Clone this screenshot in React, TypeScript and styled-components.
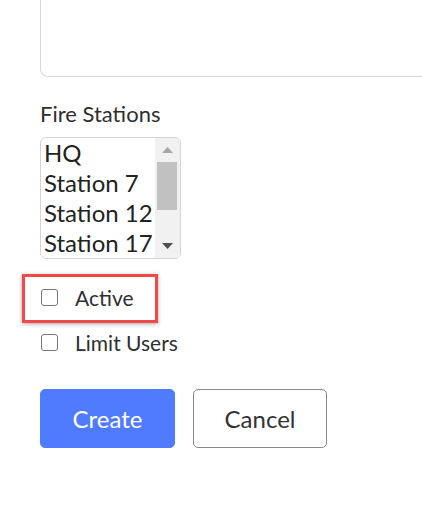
import styled, { createGlobalStyle } from "styled-components";

const GlobalStyle = createGlobalStyle`
  html, body {
    margin: 0;
    padding: 0;
    background: #fff;
    overflow: hidden;
  }
  body {
    font-family: Lato, "Open Sans", Arial, sans-serif;
    color: #333;
  }
`;

const Page = styled.div`
  display: flex;
  flex-direction: column;
  align-items: flex-start;
  padding-left: 40px;
`;

const Notes = styled.textarea`
  display: block;
  box-sizing: border-box;
  width: 382px;
  height: 107px;
  margin-top: -30px;
  border: 1px solid #d8d8d8;
  border-right: none;
  border-radius: 8px 0 0 8px;
  resize: none;
  outline: none;
`;

const FieldLabel = styled.div`
  margin-top: 24px;
  font-size: 22px;
  line-height: 1.2;
  color: #2f2f2f;
`;

const ListBox = styled.div`
  display: flex;
  box-sizing: border-box;
  margin-top: 10px;
  width: 141px;
  height: 122px;
  border: 1px solid #d4d4d4;
  border-radius: 6px;
  overflow: hidden;
`;

const Options = styled.ul`
  flex: 1;
  margin: 0;
  padding: 0;
  list-style: none;
`;

const Option = styled.li`
  height: 30px;
  padding-left: 3px;
  font-size: 24px;
  line-height: 30px;
  color: #222;
  white-space: nowrap;
`;

const ScrollBar = styled.div`
  display: flex;
  flex-direction: column;
  width: 25px;
  background: #f1f1f1;
`;

const ArrowButton = styled.div`
  display: flex;
  align-items: center;
  justify-content: center;
  height: 24px;
`;

const Track = styled.div`
  flex: 1;
  padding: 0 3px 0 2px;
`;

const Thumb = styled.div`
  height: 48px;
  background: #c1c1c1;
`;

const CheckRow = styled.label<{ $first?: boolean }>`
  position: relative;
  display: flex;
  align-items: center;
  gap: 17px;
  margin-top: ${(p) => (p.$first ? "26px" : "19px")};
  font-size: 21px;
  line-height: 1.2;
  color: #2f2f2f;
`;

const Box = styled.input`
  appearance: none;
  box-sizing: border-box;
  width: 17px;
  height: 17px;
  margin: 0 0 0 1px;
  border: 1.5px solid #767676;
  border-radius: 3px;
  background: #fff;
`;

const Highlight = styled.span`
  position: absolute;
  left: -18px;
  top: -11px;
  width: 136px;
  height: 49px;
  box-sizing: border-box;
  border: 3px solid #f24a4a;
  box-shadow: 0 1px 4px rgba(0, 0, 0, 0.35);
  pointer-events: none;
`;

const Actions = styled.div`
  display: flex;
  gap: 18px;
  margin-top: 34px;
`;

const Button = styled.button<{ $primary?: boolean }>`
  box-sizing: border-box;
  width: ${(p) => (p.$primary ? "135px" : "134px")};
  height: 59px;
  font-family: inherit;
  font-size: 24px;
  border-radius: 5px;
  cursor: pointer;
  border: 1px solid ${(p) => (p.$primary ? "#4f7cff" : "#8a8a8a")};
  background: ${(p) => (p.$primary ? "#4f7cff" : "#fff")};
  color: ${(p) => (p.$primary ? "#fff" : "#333")};
`;

const stations = ["HQ", "Station 7", "Station 12", "Station 17"];

export default function App() {
  return (
    <>
      <GlobalStyle />
      <Page>
        <Notes />
        <FieldLabel>Fire Stations</FieldLabel>
        <ListBox role="listbox" aria-multiselectable="true">
          <Options>
            {stations.map((s) => (
              <Option key={s} role="option">
                {s}
              </Option>
            ))}
          </Options>
          <ScrollBar>
            <ArrowButton>
              <svg width="11" height="6" viewBox="0 0 11 6">
                <path d="M0 6 L5.5 0 L11 6 Z" fill="#a6a6a6" />
              </svg>
            </ArrowButton>
            <Track>
              <Thumb />
            </Track>
            <ArrowButton>
              <svg width="11" height="6" viewBox="0 0 11 6">
                <path d="M0 0 L11 0 L5.5 6 Z" fill="#505050" />
              </svg>
            </ArrowButton>
          </ScrollBar>
        </ListBox>
        <CheckRow $first>
          <Box type="checkbox" />
          Active
          <Highlight />
        </CheckRow>
        <CheckRow>
          <Box type="checkbox" />
          Limit Users
        </CheckRow>
        <Actions>
          <Button $primary>Create</Button>
          <Button>Cancel</Button>
        </Actions>
      </Page>
    </>
  );
}
